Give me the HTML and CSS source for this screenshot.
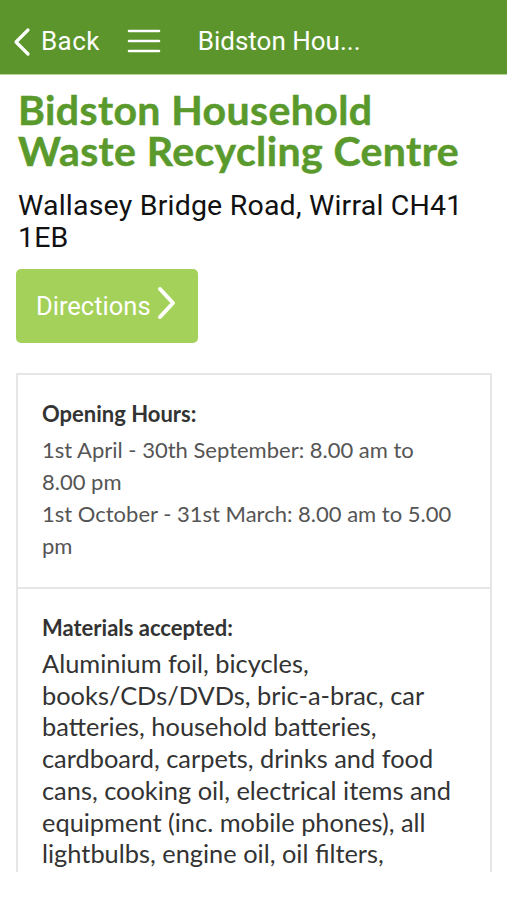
FILE: index.html
```html
<!DOCTYPE html>
<html>
<head>
<meta charset="utf-8">
<link rel="stylesheet" href="styles.css">
</head>
<body>
<div class="screen">
  <header class="navbar">
    <div class="back">
      <svg class="back-icon" width="20" height="30" viewBox="0 0 20 30"><path d="M16 3 L4 15 L16 27" fill="none" stroke="#fff" stroke-width="3.2" stroke-linecap="round" stroke-linejoin="round"/></svg>
      <span>Back</span>
    </div>
    <svg class="menu-icon" width="34" height="24" viewBox="0 0 34 24"><g stroke="#fff" stroke-width="2.6" stroke-linecap="round"><line x1="2" y1="2" x2="32" y2="2"/><line x1="2" y1="12" x2="32" y2="12"/><line x1="2" y1="22" x2="32" y2="22"/></g></svg>
    <div class="nav-title">Bidston Hou...</div>
  </header>
  <main class="content">
    <h1 class="title">Bidston Household Waste Recycling Centre</h1>
    <p class="address">Wallasey Bridge Road, Wirral CH41 1EB</p>
    <div class="btn">
      <span>Directions</span>
      <svg width="22" height="36" viewBox="0 0 22 36"><path d="M5 3 L18 17 L5 31" fill="none" stroke="#fff" stroke-width="4" stroke-linecap="round" stroke-linejoin="round"/></svg>
    </div>
    <div class="card">
      <section class="section first">
        <h2 class="label">Opening Hours:</h2>
        <p class="hours">1st April - 30th September: 8.00 am to 8.00 pm</p>
        <p class="hours">1st October - 31st March: 8.00 am to 5.00 pm</p>
      </section>
      <section class="section second">
        <h2 class="label">Materials accepted:</h2>
        <p class="materials">Aluminium foil, bicycles, books/CDs/DVDs, bric-a-brac, car batteries, household batteries, cardboard, carpets, drinks and food cans, cooking oil, electrical items and equipment (inc. mobile phones), all lightbulbs, engine oil, oil filters, garden waste, glass bottles and jars, metal, paper, plastic bottles, textiles and shoes, wood</p>
      </section>
    </div>
  </main>
</div>
</body>
</html>
```
FILE: styles.css
```css
* { box-sizing: border-box; }
html, body { margin: 0; padding: 0; background: #fff; }
.screen {
  width: 507px;
  height: 872px;
  overflow: hidden;
  display: flex;
  flex-direction: column;
}
.navbar {
  flex: 0 0 auto;
  height: 75px;
  background: #5b952c;
  border-bottom: 1px solid #b7d69c;
  display: flex;
  align-items: center;
  padding: 8px 0 0 12px;
  color: #fff;
  font-family: Roboto, "Liberation Sans", sans-serif;
  font-size: 26px;
}
.back { display: flex; align-items: center; gap: 9px; }
.back-icon { margin-top: 1px; }
.back span { letter-spacing: 0.4px; }
.menu-icon { margin-left: 27px; }
.nav-title { margin-left: 37px; }
.content { padding: 14px 16px 0 16px; }
.title {
  margin: 0;
  font-family: Lato, sans-serif;
  font-weight: 700;
  font-size: 41px;
  line-height: 41px;
  color: #5a9a2d;
  letter-spacing: 0.4px;
  padding-left: 2px;
  -webkit-text-stroke: 0.5px #5a9a2d;
}
.address {
  margin: 19px 0 0 0;
  padding-left: 2px;
  font-family: Roboto, "Liberation Sans", sans-serif;
  font-size: 28.5px;
  line-height: 32px;
  letter-spacing: 0.2px;
  color: #111;
}
.btn {
  margin-top: 15px;
  width: 182px;
  height: 74px;
  background: #a3d15a;
  border-radius: 5px;
  display: flex;
  align-items: center;
  padding-left: 20px;
  gap: 4px;
  color: #fff;
  font-family: Roboto, "Liberation Sans", sans-serif;
  font-size: 25.5px;
}
.btn svg { margin-top: -4px; }
.card {
  margin-top: 30px;
  width: 476px;
  border: 2px solid #e6e6e6;
}
.section { padding: 26px 32px 25px 24px; }
.section.second { border-top: 2px solid #e6e6e6; }
.label {
  margin: 0 0 7px 0;
  font-family: Lato, sans-serif;
  font-weight: 700;
  font-size: 22px;
  line-height: 26px;
  color: #333;
}
.hours {
  margin: 0;
  font-family: Lato, sans-serif;
  font-size: 22px;
  line-height: 32px;
  color: #555;
}
.materials {
  margin: 0;
  font-family: Lato, sans-serif;
  font-size: 25.4px;
  line-height: 31.7px;
  color: #333;
}
```
